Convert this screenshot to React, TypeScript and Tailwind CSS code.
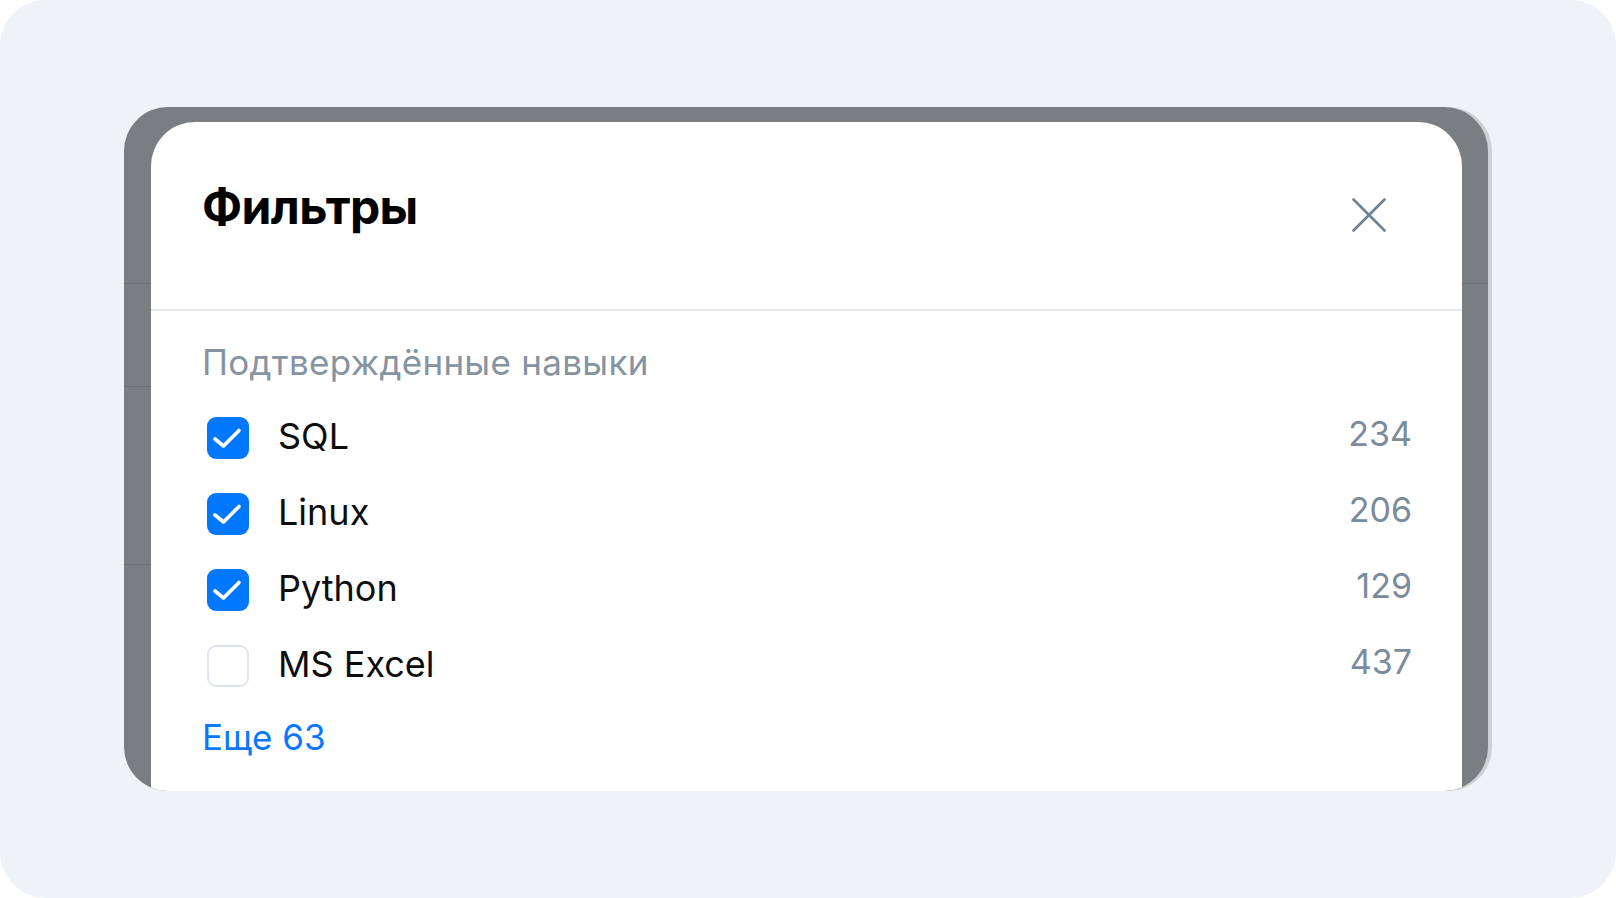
import React from "react";

const skills = [
  { name: "SQL", count: 234, checked: true },
  { name: "Linux", count: 206, checked: true },
  { name: "Python", count: 129, checked: true },
  { name: "MS Excel", count: 437, checked: false },
];

function Checkbox({ checked }: { checked: boolean }) {
  if (!checked) {
    return <div className="ml-[5px] h-[42px] w-[42px] shrink-0 rounded-[9px] border-2 border-[#e0e5ec] bg-white" />;
  }
  return (
    <div className="ml-[5px] flex h-[42px] w-[42px] shrink-0 items-center justify-center rounded-[9px] bg-[#0077ff]">
      <svg width="42" height="42" viewBox="0 0 42 42" fill="none">
        <path d="M8 22L16.5 29L32 13.5" stroke="white" strokeWidth="3.6" strokeLinecap="round" strokeLinejoin="round" />
      </svg>
    </div>
  );
}

export default function App() {
  return (
    <div className="h-[898px] w-[1616px] bg-white font-['Inter',sans-serif]">
      <div className="h-full w-full rounded-[46px] bg-[#eff3f8] pl-[124px] pt-[107px]">
        <div className="relative h-[684px] w-[1364px] overflow-hidden rounded-[44px] bg-[#7a7e81] pl-[27px] pt-[15px] shadow-[4px_0_0_#cfd0d2]">
          {/* ghost lines of the dimmed page behind */}
          <div className="absolute left-0 right-0 top-[176px] h-px bg-[#6d7174]" />
          <div className="absolute left-0 top-[279px] h-px w-[27px] bg-[#6d7174]" />
          <div className="absolute left-0 top-[457px] h-px w-[27px] bg-[#6d7174]" />

          <div className="relative h-[669px] w-[1311px] rounded-t-[44px] bg-white">
            <div className="flex h-[189px] items-start justify-between border-b-2 border-[#e5e9ef] pl-[51px] pr-[76px] pt-[61px]">
              <h1 className="text-[48px] font-bold leading-none tracking-[-0.6px] text-black">Фильтры</h1>
              <button className="mt-[15px]">
                <svg width="34" height="34" viewBox="0 0 34 34" fill="none">
                  <path d="M1.5 1.5L32.5 32.5M32.5 1.5L1.5 32.5" stroke="#6e8294" strokeWidth="2.6" strokeLinecap="round" />
                </svg>
              </button>
            </div>

            <div className="pl-[51px] pr-[50px] pt-[34px]">
              <div className="text-[35px] leading-none tracking-[0.3px] text-[#8593a2]">Подтверждённые навыки</div>
              <div className="mt-[20px]">
                {skills.map((s) => (
                  <div key={s.name} className="flex h-[76px] items-center">
                    <Checkbox checked={s.checked} />
                    <span className="mb-[5px] ml-[29px] flex-1 text-[36px] leading-none text-[#0d0d0d]">{s.name}</span>
                    <span className="mb-[8px] text-[34px] leading-none text-[#7b8b9b]">{s.count}</span>
                  </div>
                ))}
              </div>
              <div className="mt-[16px] text-[35px] leading-none text-[#0a77ff]">Еще 63</div>
            </div>
          </div>
        </div>
      </div>
    </div>
  );
}
